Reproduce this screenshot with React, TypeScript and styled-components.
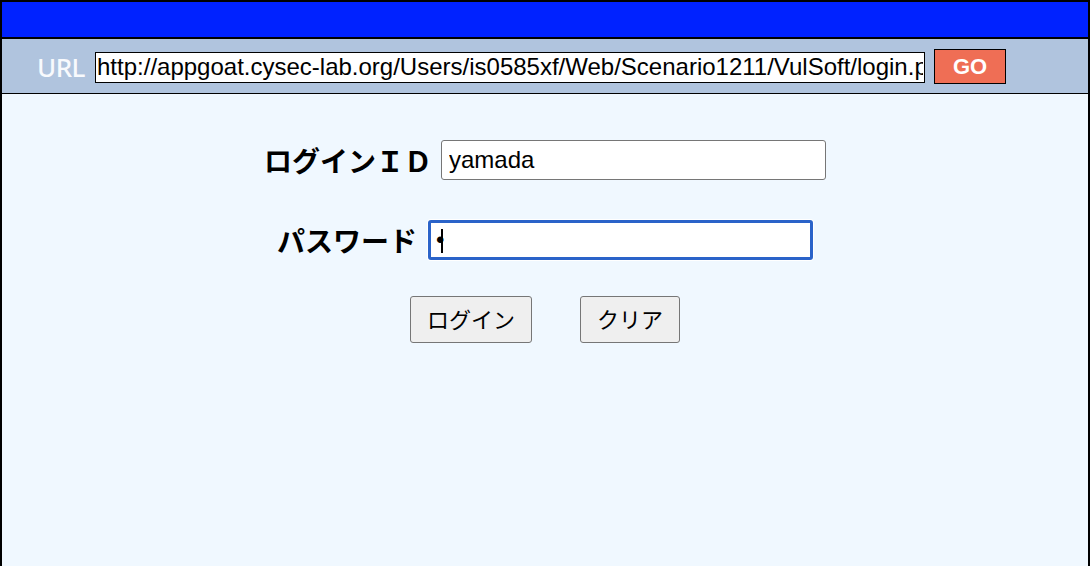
import React from "react";
import styled, { createGlobalStyle } from "styled-components";

const GlobalStyle = createGlobalStyle`
  html, body { margin: 0; padding: 0; background: #ffffff; }
  body { font-family: "Liberation Sans", "Noto Sans CJK JP", sans-serif; }
  * { box-sizing: border-box; }
`;

const Frame = styled.div`
  width: 1090px;
  min-height: 100vh;
  border: 2px solid #000;
  border-bottom: none;
  display: flex;
  flex-direction: column;
  background: #f0f8ff;
`;

const TitleBar = styled.div`
  height: 37px;
  background: #0022ff;
  border-bottom: 2px solid #000;
`;

const UrlBar = styled.div`
  height: 55px;
  background: #b0c4de;
  border-bottom: 1.5px solid #000;
  display: flex;
  align-items: center;
  padding: 2px 0 0 35px;
  gap: 10px;
`;

const UrlLabel = styled.span`
  font-family: "Noto Sans", "Open Sans", sans-serif;
  font-size: 26px;
  font-weight: 500;
  color: #f8fafd;
  letter-spacing: -0.5px;
`;

const UrlInput = styled.input`
  width: 830px;
  height: 31px;
  border: 1px solid #000;
  background: #fff;
  font-family: "Liberation Sans", Arial, sans-serif;
  font-size: 24px;
  color: #000;
  padding: 0 1px;
  outline: none;
`;

const GoButton = styled.button`
  width: 72px;
  height: 35px;
  margin-top: -1px;
  margin-left: -1px;
  background: #ef6e55;
  border: 1px solid #000;
  color: #fff;
  font-family: "Liberation Sans", Arial, sans-serif;
  font-weight: 700;
  font-size: 22px;
  padding: 0;
`;

const Content = styled.form`
  flex: 1;
  display: flex;
  flex-direction: column;
  align-items: center;
  padding-top: 46px;
`;

const Row = styled.div<{ $mb: number }>`
  display: flex;
  align-items: center;
  gap: 9px;
  margin-bottom: ${(p) => p.$mb}px;
`;

const FieldLabel = styled.label`
  font-family: "Noto Sans CJK JP", sans-serif;
  font-weight: 700;
  font-size: 28px;
  color: #000;
  line-height: 1;
`;

const FieldWrap = styled.div`
  position: relative;
  margin-left: 2px;
`;

const TextField = styled.input<{ $focused?: boolean }>`
  width: 385px;
  height: 40px;
  border-radius: 3px;
  border: ${(p) => (p.$focused ? "3px solid #2a63c9" : "1px solid #767676")};
  box-shadow: ${(p) => (p.$focused ? "0 0 0 1px #ffffff" : "none")};
  background: #fff;
  font-family: "Liberation Sans", Arial, sans-serif;
  font-size: 24px;
  color: #000;
  padding: ${(p) => (p.$focused ? "0 5px" : "0 7px")};
  outline: none;
`;

const Caret = styled.span`
  position: absolute;
  left: 13px;
  top: 9px;
  width: 2px;
  height: 24px;
  background: #000;
`;

const ButtonRow = styled.div`
  display: flex;
  gap: 48px;
`;

const FormButton = styled.button`
  height: 47px;
  padding: 0 16px 4px;
  font-family: "Noto Sans CJK JP", sans-serif;
  font-size: 22px;
  color: #000;
  background: #efefef;
  border: 1px solid #767676;
  border-radius: 3px;
`;

export default function App() {
  return (
    <>
      <GlobalStyle />
      <Frame>
        <TitleBar />
        <UrlBar>
          <UrlLabel>URL</UrlLabel>
          <UrlInput
            readOnly
            value="http://appgoat.cysec-lab.org/Users/is0585xf/Web/Scenario1211/VulSoft/login.php"
          />
          <GoButton type="button">GO</GoButton>
        </UrlBar>
        <Content onSubmit={(e) => e.preventDefault()}>
          <Row $mb={40}>
            <FieldLabel>ログインＩＤ</FieldLabel>
            <TextField readOnly value="yamada" />
          </Row>
          <Row $mb={36}>
            <FieldLabel>パスワード</FieldLabel>
            <FieldWrap>
              <TextField $focused readOnly type="password" value="a" />
              <Caret />
            </FieldWrap>
          </Row>
          <ButtonRow>
            <FormButton type="button">ログイン</FormButton>
            <FormButton type="button">クリア</FormButton>
          </ButtonRow>
        </Content>
      </Frame>
    </>
  );
}
